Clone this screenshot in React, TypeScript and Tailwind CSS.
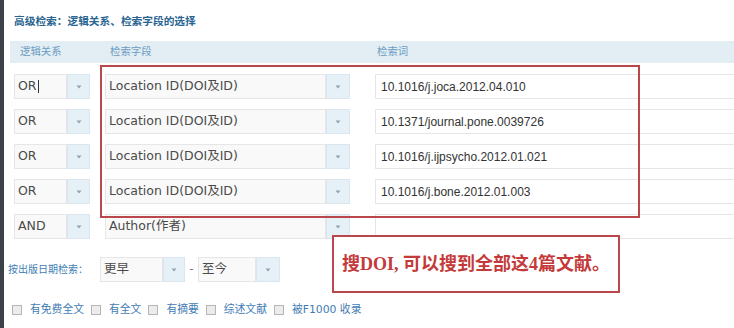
import React from 'react'

const logicRows = [
  { logic: 'OR', field: 'Location ID(DOI及ID)', term: '10.1016/j.joca.2012.04.010', cursor: true },
  { logic: 'OR', field: 'Location ID(DOI及ID)', term: '10.1371/journal.pone.0039726' },
  { logic: 'OR', field: 'Location ID(DOI及ID)', term: '10.1016/j.ijpsycho.2012.01.021' },
  { logic: 'OR', field: 'Location ID(DOI及ID)', term: '10.1016/j.bone.2012.01.003' },
  { logic: 'AND', field: 'Author(作者)', term: '' },
]

const filters = ['有免费全文', '有全文', '有摘要', '综述文献', '被F1000 收录']

function Caret() {
  return (
    <svg width="6" height="4" viewBox="0 0 6 4">
      <path d="M0.5 0.5 L5.5 0.5 L3 3.5 Z" fill="#8ea3b3" />
    </svg>
  )
}

function SelectBox({ text, textWidth, arrowWidth, cursor }: { text: string; textWidth: string; arrowWidth: string; cursor?: boolean }) {
  return (
    <div className="flex h-[25px] shrink-0">
      <div className={`${textWidth} flex items-center border border-[#e6e6e6] bg-[#f9f9f9] pl-[3px] text-[12.5px] text-[#4a4a4a]`}>
        {text}
        {cursor && <span className="ml-[1px] inline-block h-[13px] w-px bg-[#333]" />}
      </div>
      <div className={`${arrowWidth} flex items-center justify-center border border-[#d9e6ef] bg-[#e6f0f7]`}>
        <Caret />
      </div>
    </div>
  )
}

export default function App() {
  return (
    <div
      className="relative flex h-[328px] w-[734px] overflow-hidden bg-white"
      style={{ fontFamily: '"DejaVu Sans", "Noto Sans CJK SC", sans-serif' }}
    >
      <div className="w-[4px] shrink-0 bg-[#3c4147]" />
      <div className="flex min-w-0 flex-1 flex-col">
        <div className="ml-[10px] mt-[15px] h-[14px] text-[10.7px] font-semibold leading-[14px] text-[#2a6592]">
          高级检索：逻辑关系、检索字段的选择
        </div>

        <div className="ml-[6px] mt-[12px] flex h-[22px] items-center bg-[#e3eef4] text-[10.4px] text-[#6c9cc2]">
          <div className="w-[90px] pl-[10px]">逻辑关系</div>
          <div className="w-[267px] pl-[10px]">检索字段</div>
          <div className="pl-[10px]">检索词</div>
        </div>

        <div className="mt-[11px] flex flex-col gap-[10px]">
          {logicRows.map((row, i) => (
            <div key={i} className="flex h-[25px]">
              <div className="ml-[10px]">
                <SelectBox text={row.logic} textWidth="w-[53px]" arrowWidth="w-[23px]" cursor={row.cursor} />
              </div>
              <div className="ml-[15px]">
                <SelectBox text={row.field} textWidth="w-[221px]" arrowWidth="w-[24px]" />
              </div>
              <div
                className="ml-[25px] flex flex-1 items-center border border-r-0 border-[#e6e6e6] bg-white pl-[5px] text-[12px] text-[#333]"
                style={{ fontFamily: '"Liberation Sans", Arial, sans-serif' }}
              >
                {row.term}
              </div>
            </div>
          ))}
        </div>

        <div className="ml-[4px] mt-[18px] flex h-[25px] items-center">
          <div className="w-[92px] text-[10px] text-[#3f7db5]">按出版日期检索：</div>
          <SelectBox text="更早" textWidth="w-[63px]" arrowWidth="w-[22px]" />
          <div className="w-[13px] text-center text-[11px] text-[#666]">-</div>
          <SelectBox text="至今" textWidth="w-[58px]" arrowWidth="w-[24px]" />
        </div>

        <div className="ml-[8px] mt-[20px] flex items-center text-[10.8px] text-[#3f7db5]">
          {filters.map(f => (
            <div key={f} className="mr-[7px] flex items-center">
              <span className="mr-[8px] inline-block h-[10px] w-[10px] border border-[#b5b5b5] bg-[#ececec]" />
              <span>{f}</span>
            </div>
          ))}
        </div>
      </div>

      <div className="absolute left-[100px] top-[65px] h-[153px] w-[540px] border-2 border-[#b9474b]" />

      <div className="absolute left-[332px] top-[235px] flex h-[58px] w-[288px] items-center justify-center border-2 border-[#b9474b] bg-white">
        <span className="text-[18px] font-bold text-[#c43a3a]" style={{ fontFamily: '"Liberation Serif", "Noto Sans CJK SC", serif' }}>
          搜DOI, 可以搜到全部这4篇文献。
        </span>
      </div>
    </div>
  )
}
